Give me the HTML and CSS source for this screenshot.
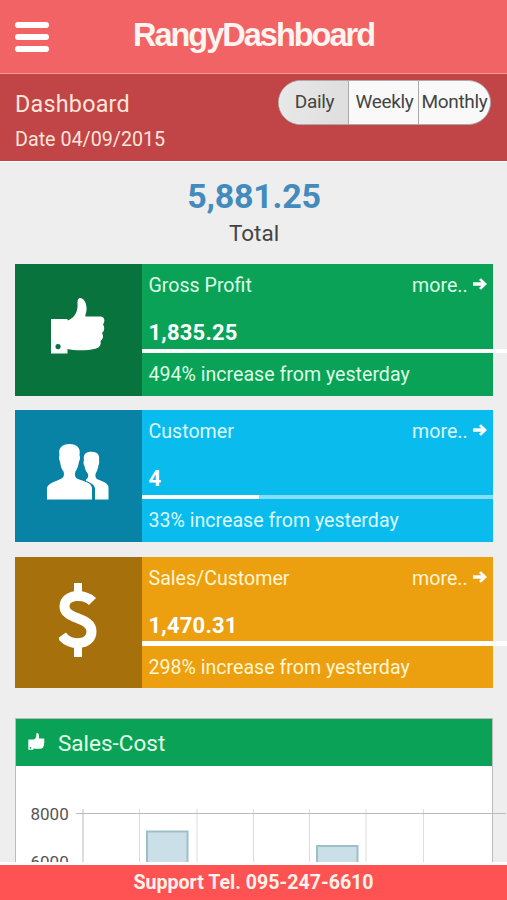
FILE: index.html
```html
<!DOCTYPE html>
<html lang="en">
<head>
<meta charset="utf-8">
<meta name="viewport" content="width=device-width">
<title>RangyDashboard</title>
<link rel="stylesheet" href="styles.css">
</head>
<body>
<svg class="defs" aria-hidden="true">
  <symbol id="thumb" viewBox="0 0 54 56">
    <path fill-rule="evenodd" d="M0 21H16.500V22.500C24 20 27 13 26.500 6C26.300 2 27 0 29.500 0C34 1 36 7 35.500 12C35.300 15 34 17 34.500 18.500C40 18.500 46 18.300 50 18.500C53.500 19 54.500 23 52 26.500C54 29 53.500 33 51 35C53 38 52 41 49.500 43C50.500 47 48 50 44 50.800C35 53 23 52.500 16.500 51V55.500H0ZM7 46a2.600 2.600 0 1 0 .1 0Z"/>
  </symbol>
  <symbol id="arrow" viewBox="0 0 15 12">
    <path d="M0 4.300H8.600L6.200 1.900L8.200 0L14.600 6L8.200 12L6.200 10.100L8.600 7.700H0Z"/>
  </symbol>
</svg>
<div class="screen">
  <header class="topbar">
    <div class="menu"><i></i><i></i><i></i></div>
    <h1 class="brand">RangyDashboard</h1>
  </header>
  <section class="subbar">
    <div>
      <h2 class="page-title">Dashboard</h2>
      <p class="date">Date 04/09/2015</p>
    </div>
    <div class="tabs">
      <span class="tab active">Daily</span><span class="tab">Weekly</span><span class="tab">Monthly</span>
    </div>
  </section>
  <main class="content">
    <div class="total">
      <div class="amount">5,881.25</div>
      <div class="label">Total</div>
    </div>
    <article class="card green">
      <div class="icon"><svg class="i-thumb"><use href="#thumb"/></svg></div>
      <div class="info">
        <div class="head"><span>Gross Profit</span><span class="more">more.. <svg><use href="#arrow"/></svg></span></div>
        <div class="value">1,835.25</div>
        <div class="bar"><div class="fill over"></div></div>
        <div class="note">494% increase from yesterday</div>
      </div>
    </article>
    <article class="card blue">
      <div class="icon">
        <svg class="i-users" viewBox="0 0 62 56">
          <path d="M39 35.500C41 34.500 41.500 32 41 30C38.500 27 38 24 37.500 22C36 20 36.500 17 37 16C36 10 39 7.700 44.500 7.700C50 7.700 53 10.500 52 16C52.500 18 52 20 51.300 22C51 25 49.500 28 48.500 30C48 33 49 34.500 51 35.500C56 37.500 61 39 61.500 43V55.500H48V45C48 41 43.500 38.500 39 37Z"/>
          <path d="M22.500 0C30 0 34 4 32.500 11C33.500 13 33 16 32 17.500C31.500 22 30 25 28.500 27.500C27.500 31 28 34 31 35C38 37.500 44.500 39 45 44V55.500H0V44C1 39 8 38 13.500 35C17 33.500 17.500 31 16.500 27.500C14.500 25 13.500 22 13 17.500C12 16 11.500 13 12.500 11C11 4 15 0 22.500 0Z"/>
        </svg>
      </div>
      <div class="info">
        <div class="head"><span>Customer</span><span class="more">more.. <svg><use href="#arrow"/></svg></span></div>
        <div class="value">4</div>
        <div class="bar"><div class="fill third"></div></div>
        <div class="note">33% increase from yesterday</div>
      </div>
    </article>
    <article class="card orange">
      <div class="icon">
        <svg class="i-dollar" viewBox="0 0 38 74">
          <path class="curve" d="M33.500 18.500C25 10 5.500 11 5.500 23.500C5.500 37 32.500 33.500 32.500 48.500C32.500 62.500 11 64 2.800 52.500"/>
          <path d="M15 0H23V13H15ZM15 61H23V74H15Z"/>
        </svg>
      </div>
      <div class="info">
        <div class="head"><span>Sales/Customer</span><span class="more">more.. <svg><use href="#arrow"/></svg></span></div>
        <div class="value">1,470.31</div>
        <div class="bar"><div class="fill over"></div></div>
        <div class="note">298% increase from yesterday</div>
      </div>
    </article>
    <section class="panel">
      <h3 class="panel-head"><svg><use href="#thumb"/></svg>Sales-Cost</h3>
      <svg class="chart" viewBox="0 0 492 96">
        <path class="grid" d="M123.500 43V96M181 43V96M237.500 43V96M293.500 43V96M350 43V96M407.500 43V96"/>
        <path class="axis" d="M60 47.500H490M67 43V96"/>
        <rect class="col" x="131" y="65.500" width="40.500" height="60"/>
        <rect class="col" x="301" y="80" width="40.500" height="60"/>
        <text x="14.500" y="54">8000</text>
        <text x="14.500" y="102">6000</text>
      </svg>
    </section>
  </main>
  <footer class="support">Support Tel. 095-247-6610</footer>
</div>
</body>
</html>
```
FILE: styles.css
```css
* { box-sizing: border-box; }
body { margin: 0; font-family: Roboto, "Liberation Sans", sans-serif; background: #eee; }
h1, h2, h3, p { margin: 0; font-weight: 400; }
.defs { display: none; }
.screen { width: 507px; height: 900px; overflow: hidden; display: flex; flex-direction: column; }

.topbar { flex: none; height: 74px; background: #f16364; border-bottom: 1px solid #f89b98; display: grid; grid-template-columns: 100px 1fr 100px; padding-left: 15px; }
.menu { display: flex; flex-direction: column; gap: 6px; padding-top: 22px; }
.menu i { width: 34px; height: 6px; border-radius: 3px; background: #fff; }
.brand { font: bold 32.500px/71px "Liberation Sans", sans-serif; letter-spacing: -2px; color: #fff4f0; text-align: center; white-space: nowrap; margin-left: -15px; }

.subbar { flex: none; height: 88px; background: #c14547; border-bottom: 1px solid #fff; display: flex; justify-content: space-between; padding: 0 16px 0 15px; color: #ffe4da; }
.page-title { font-size: 23.300px; line-height: 28px; margin-top: 16px; letter-spacing: 0.250px; }
.date { font-size: 19.700px; line-height: 26px; margin-top: 9px; }
.tabs { display: flex; width: 213px; height: 45px; margin-top: 6px; border: 1px solid #aaa; border-radius: 23px; background: #f9f9f9; overflow: hidden; color: #444; font-size: 19px; letter-spacing: -0.350px; line-height: 41px; text-align: center; }
.tab { flex: none; width: 70px; border-right: 1px solid #aaa; }
.tab.active { background: linear-gradient(90deg, #e8e8e8, #dedede); padding-left: 2px; }
.tab:nth-child(2) { padding-left: 2px; }
.tab:last-child { width: 71px; border: 0; }

.content { flex: 1; min-height: 0; overflow: hidden; padding: 0 14px 0 15px; }
.total { height: 102px; padding-top: 14px; text-align: center; }
.amount { font-size: 34px; font-weight: 700; line-height: 41px; letter-spacing: -0.200px; color: #428bbc; }
.label { font-size: 22.500px; line-height: 32px; color: #444; }

.card { display: flex; height: 131.500px; margin-bottom: 14.800px; color: #fff; }
.icon { flex: none; width: 126.500px; display: flex; align-items: center; justify-content: center; fill: #fff; }
.info { flex: 1; min-width: 0; font-size: 19.600px; }
.head { display: flex; justify-content: space-between; padding: 1px 6px 0 7px; line-height: 42px; height: 55px; }
.more svg { width: 14.500px; height: 12px; fill: #fff; position: relative; top: -2px; }
.value { height: 29.500px; padding-left: 7px; font-size: 22px; font-weight: 700; line-height: 28px; letter-spacing: 0.200px; }
.bar { height: 4.500px; background: rgba(255, 255, 255, 0.500); }
.fill { height: 100%; background: #fff; }
.fill.over { width: 380px; }
.fill.third { width: 33.300%; }
.note { padding: 1px 0 0 7px; line-height: 41px; }
.green { background: #0aa257; }
.green .icon { background: #08733d; }
.green .info { color: #ddffe6; }
.blue { background: #0abbee; }
.blue .icon { background: #0883a5; }
.blue .info { color: #ddfbff; }
.orange { background: #eda00f; }
.orange .icon { background: #a6700c; }
.orange .info { color: #fff6d4; }
.info .value { color: #fff; }
.i-thumb { width: 54px; height: 56px; margin-top: -8px; }
.i-users { width: 62px; height: 56px; margin-top: -8px; }
.i-dollar { width: 38px; height: 74px; margin-top: -5px; }
.curve { fill: none; stroke: #fff; stroke-width: 10px; }

.panel { margin-top: 29.500px; height: 200px; border: 1px solid #bbb; background: #fff; }
.panel-head { display: flex; align-items: center; height: 47.500px; padding: 2px 0 0 12px; gap: 13px; background: #0aa257; color: #e2ffe9; font-size: 22.500px; line-height: 46px; }
.panel-head svg { width: 17px; height: 17px; fill: #fff; margin-top: -4px; }
.chart { display: block; width: 492px; height: 96px; }
.chart text { font-size: 17px; fill: #555; }
.grid { stroke: #ddd; fill: none; }
.axis { stroke: #bbb; fill: none; }
.col { fill: #cbdfe8; stroke: #9dbfc8; stroke-width: 2px; }

.support { flex: none; height: 38px; border-top: 3px solid #fff; background: #ff5252; color: #fff4ec; font-size: 19.600px; font-weight: 700; line-height: 35px; text-align: center; }
```
